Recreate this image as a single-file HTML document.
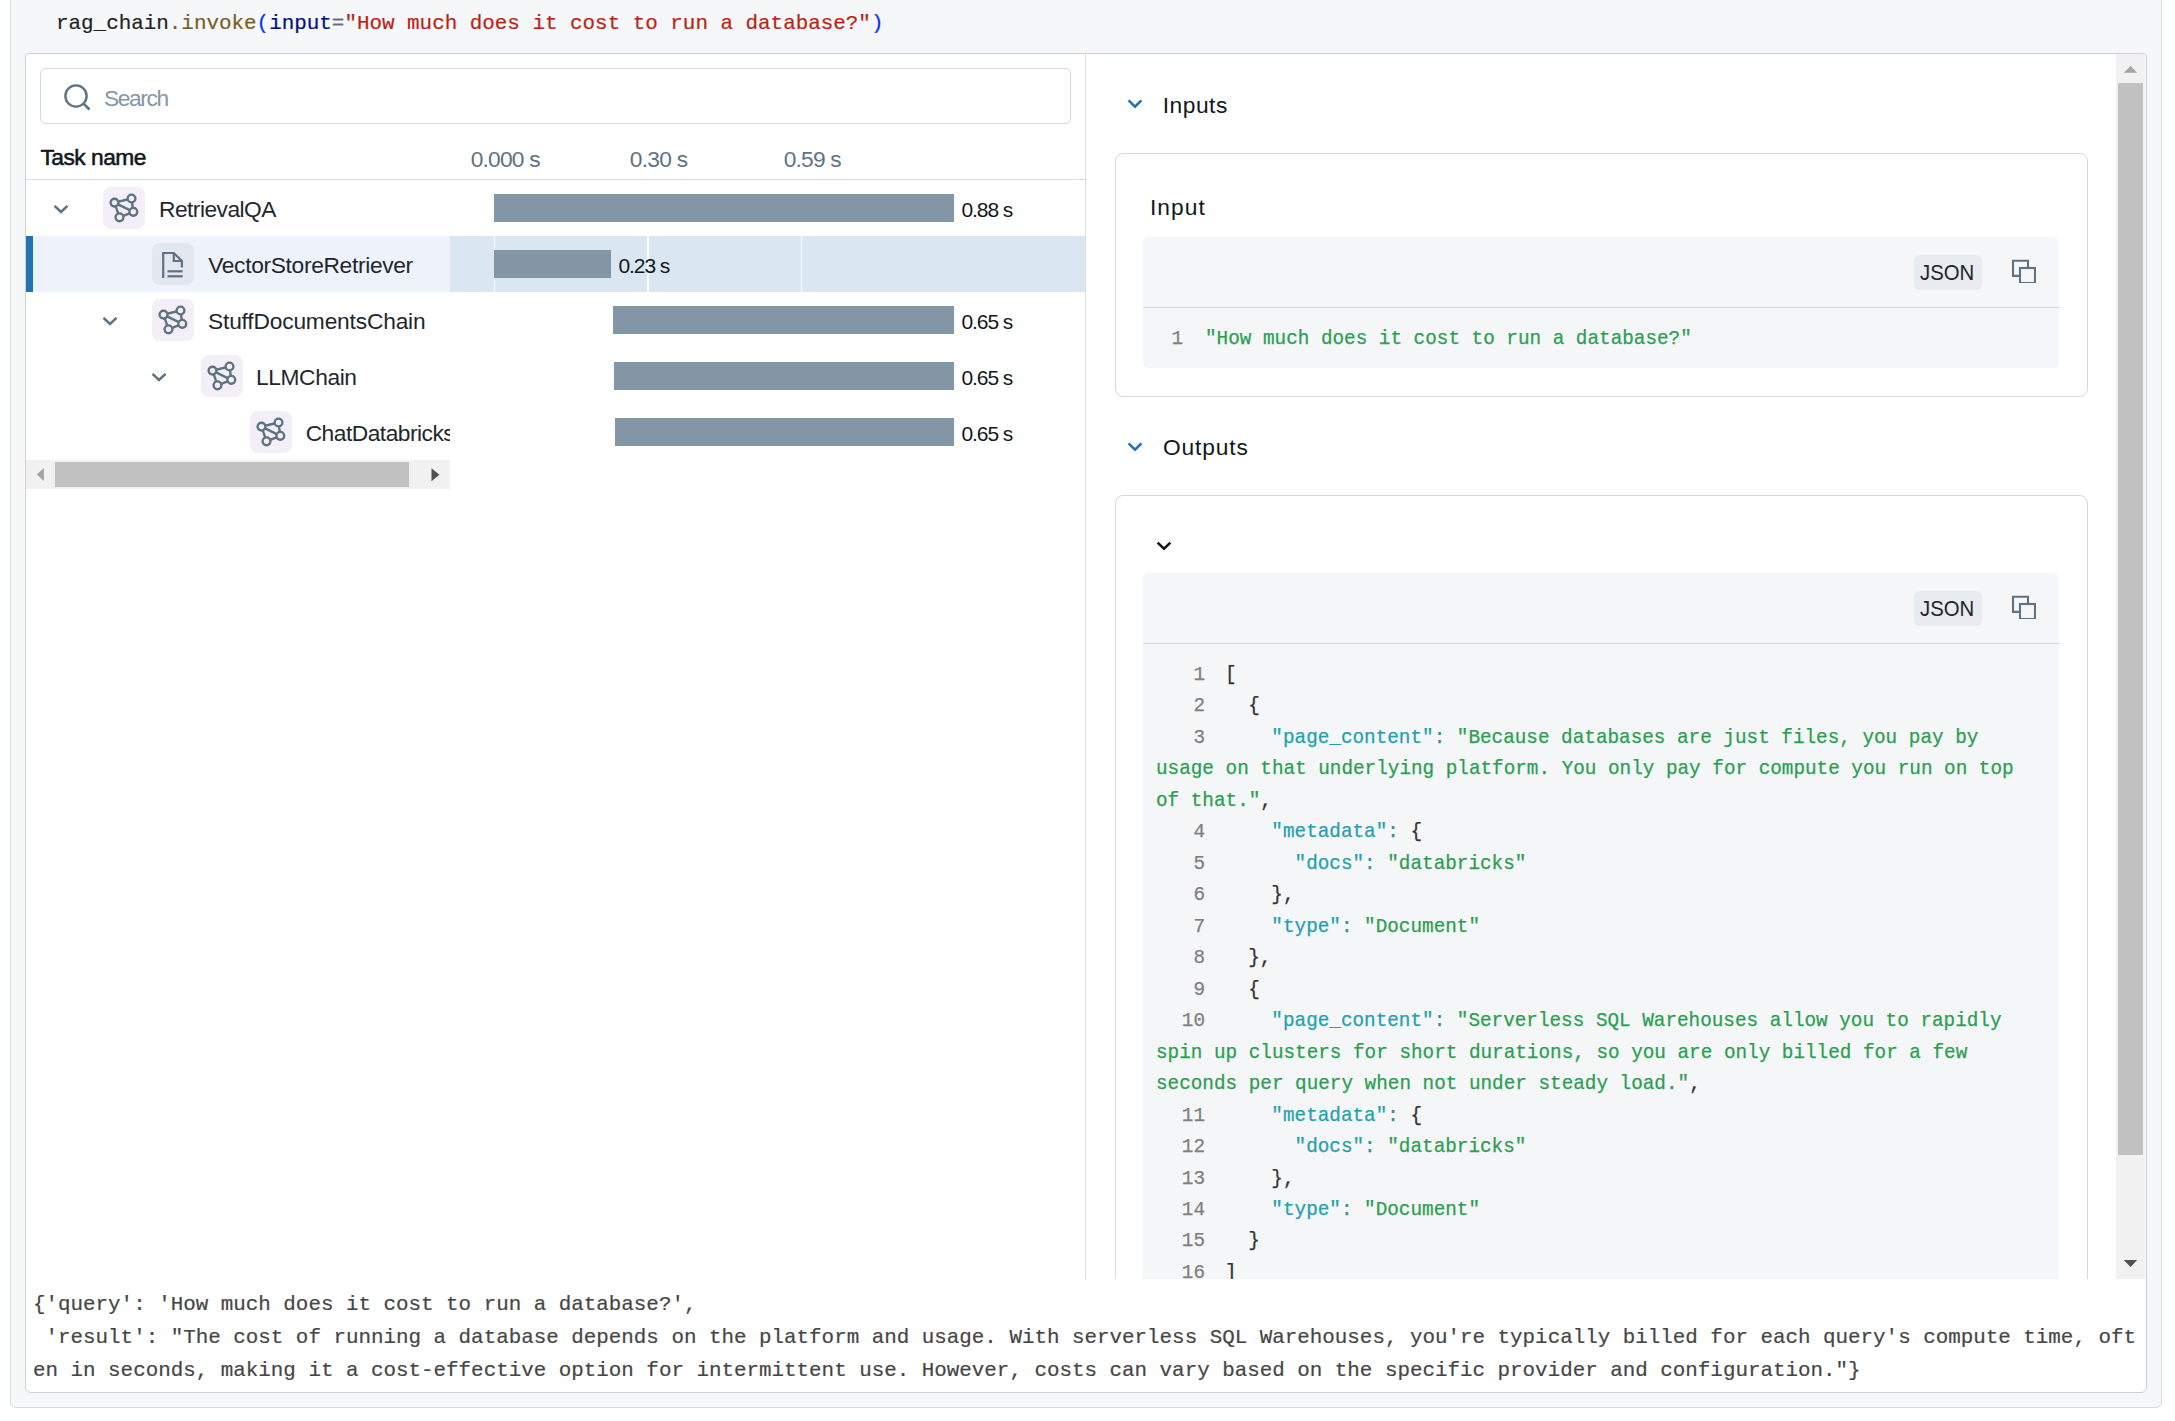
<!DOCTYPE html>
<html><head><meta charset="utf-8">
<style>
html,body{margin:0;padding:0;}
body{width:2175px;height:1421px;position:relative;overflow:hidden;background:#fff;font-family:"Liberation Sans",sans-serif;}
.a{position:absolute;}
.mono{font-family:"Liberation Mono",monospace;white-space:pre;-webkit-text-stroke-width:0.2px;}
.cell{left:10px;top:-20px;width:2151.5px;height:1428px;background:#f6f7f9;border:1.5px solid #d3dbe3;border-radius:6px;box-sizing:border-box;}
.inner{left:25px;top:53px;width:2122px;height:1340px;background:#fff;border:1.5px solid #c9d3dd;border-radius:4px 4px 6px 6px;box-sizing:border-box;}
.code1{left:56px;top:14px;font-size:20.9px;line-height:1;color:#1f2328;}
.out{left:33px;font-size:20.87px;line-height:33px;color:#464646;}
.tx{white-space:pre;line-height:1;}
.ico{width:41.5px;height:41.5px;border-radius:8px;background:#f2eff8;}
.bar{background:#8396a5;height:28px;}
.dur{font-size:19.2px;color:#11171c;}
.card{border:1.5px solid #d1d9e1;border-radius:8px;box-sizing:border-box;background:#fff;}
.cb{background:#f5f6f8;border-radius:6px;}
.pill{background:#e8ebef;border-radius:6px;}
.jl{font-family:"Liberation Mono",monospace;white-space:pre;font-size:19.32px;line-height:31.5px;color:#333;-webkit-text-stroke-width:0.25px;}
.k{color:#24a1ad}.p{color:#348f98}.s{color:#2c9e52}.n{color:#808080}
</style></head><body>
<div class="a cell"></div>
<div class="a mono code1"><span>rag_chain</span><span style="color:#795e26">.invoke</span><span style="color:#0431fa">(</span><span style="color:#001080">input</span><span style="color:#5f6b7a">=</span><span style="color:#bd2312">"How much does it cost to run a database?"</span><span style="color:#0431fa">)</span></div>
<div class="a inner"></div>


<!-- LEFT PANEL -->
<div class="a" style="left:1084.6px;top:54px;width:1.5px;height:1225px;background:#d7dee5"></div>
<div class="a" style="left:40px;top:67.6px;width:1031px;height:56.4px;border:1.5px solid #d1d9e1;border-radius:6px;box-sizing:border-box"></div>
<svg class="a" style="left:60px;top:80px" width="34" height="34" viewBox="0 0 34 34"><circle cx="16" cy="16" r="10.6" fill="none" stroke="#5f7281" stroke-width="2.4"/><line x1="23.8" y1="23.8" x2="29.5" y2="29.5" stroke="#5f7281" stroke-width="2.6"/></svg>
<div class="a tx" style="left:104px;top:86.9px;font-size:22.75px;letter-spacing:-1.41px;color:#8396a5">Search</div>
<div class="a tx" style="left:40.4px;top:145.6px;font-size:22.75px;-webkit-text-stroke:0.55px #11171c;letter-spacing:-0.5px;color:#11171c">Task name</div>
<div class="a tx" style="left:470.7px;top:148.4px;font-size:22.75px;letter-spacing:-0.79px;color:#5f7281">0.000 s</div>
<div class="a tx" style="left:629.8px;top:148.4px;font-size:22.75px;letter-spacing:-0.71px;color:#5f7281">0.30 s</div>
<div class="a tx" style="left:783.7px;top:148.4px;font-size:22.75px;letter-spacing:-0.79px;color:#5f7281">0.59 s</div>
<div class="a" style="left:26px;top:178.8px;width:1059px;height:1.5px;background:#d7dee5"></div>
<!-- selected row -->
<div class="a" style="left:26px;top:236px;width:424px;height:56px;background:#eef3fb"></div>
<div class="a" style="left:450px;top:236px;width:635px;height:56px;background:#dbe6f3"></div>
<div class="a" style="left:26px;top:236px;width:7px;height:56px;background:#2272b4"></div>
<div class="a" style="left:493.5px;top:236px;width:1.5px;height:56px;background:#fff"></div>
<div class="a" style="left:647px;top:236px;width:2px;height:56px;background:#fff"></div>
<div class="a" style="left:800.5px;top:236px;width:1.5px;height:56px;background:#fff"></div>
<svg class="a" style="left:51.7px;top:203px" width="18" height="12" viewBox="0 0 18 12"><polyline points="2.5,2.8 9,9 15.5,2.8" fill="none" stroke="#5f7281" stroke-width="2.5"/></svg>
<div class="a ico" style="left:103.2px;top:187px;background:#f2eff8"><svg width="42" height="42" viewBox="0 0 42 42" style="position:absolute;left:0;top:0"><g fill="none" stroke="#5f7281" stroke-width="2.4"><line x1="11.5" y1="15.6" x2="28.5" y2="11.5"/><line x1="11.5" y1="15.6" x2="30.3" y2="24.8"/><line x1="11.5" y1="15.6" x2="16.5" y2="30.3"/><line x1="28.5" y1="11.5" x2="30.3" y2="24.8"/><line x1="30.3" y1="24.8" x2="16.5" y2="30.3"/></g><g fill="#f2eff8" stroke="#5f7281" stroke-width="2.4"><circle cx="11.5" cy="15.6" r="3.9"/><circle cx="28.5" cy="11.5" r="3.9"/><circle cx="30.3" cy="24.8" r="3.9"/><circle cx="16.5" cy="30.3" r="3.9"/></g></svg></div>
<div class="a" style="left:159.0px;top:188px;width:291.0px;height:40px;overflow:hidden"><div class="tx" style="position:absolute;left:0;top:10.4px;font-size:22.75px;letter-spacing:-0.525px;color:#1f272d">RetrievalQA</div></div>
<div class="a ico" style="left:152.2px;top:243px;background:#e2e7f0"><svg width="42" height="42" viewBox="0 0 42 42" style="position:absolute;left:0;top:0"><g fill="none" stroke="#5f7281" stroke-width="2.2"><polyline points="11.2,35 11.2,10 21.8,10 29.9,18 29.9,24.4"/><polyline points="21.8,10 21.8,18 29.9,18"/><line x1="15.5" y1="28.3" x2="30.6" y2="28.3"/><line x1="15.5" y1="33.3" x2="30.6" y2="33.3"/></g></svg></div>
<div class="a" style="left:208.2px;top:244px;width:241.8px;height:40px;overflow:hidden"><div class="tx" style="position:absolute;left:0;top:10.4px;font-size:22.75px;letter-spacing:-0.325px;color:#1f272d">VectorStoreRetriever</div></div>
<svg class="a" style="left:100.7px;top:315px" width="18" height="12" viewBox="0 0 18 12"><polyline points="2.5,2.8 9,9 15.5,2.8" fill="none" stroke="#5f7281" stroke-width="2.5"/></svg>
<div class="a ico" style="left:152.2px;top:299px;background:#f2eff8"><svg width="42" height="42" viewBox="0 0 42 42" style="position:absolute;left:0;top:0"><g fill="none" stroke="#5f7281" stroke-width="2.4"><line x1="11.5" y1="15.6" x2="28.5" y2="11.5"/><line x1="11.5" y1="15.6" x2="30.3" y2="24.8"/><line x1="11.5" y1="15.6" x2="16.5" y2="30.3"/><line x1="28.5" y1="11.5" x2="30.3" y2="24.8"/><line x1="30.3" y1="24.8" x2="16.5" y2="30.3"/></g><g fill="#f2eff8" stroke="#5f7281" stroke-width="2.4"><circle cx="11.5" cy="15.6" r="3.9"/><circle cx="28.5" cy="11.5" r="3.9"/><circle cx="30.3" cy="24.8" r="3.9"/><circle cx="16.5" cy="30.3" r="3.9"/></g></svg></div>
<div class="a" style="left:208.0px;top:300px;width:242.0px;height:40px;overflow:hidden"><div class="tx" style="position:absolute;left:0;top:10.4px;font-size:22.75px;letter-spacing:-0.18px;color:#1f272d">StuffDocumentsChain</div></div>
<svg class="a" style="left:149.7px;top:371px" width="18" height="12" viewBox="0 0 18 12"><polyline points="2.5,2.8 9,9 15.5,2.8" fill="none" stroke="#5f7281" stroke-width="2.5"/></svg>
<div class="a ico" style="left:201.2px;top:355px;background:#f2eff8"><svg width="42" height="42" viewBox="0 0 42 42" style="position:absolute;left:0;top:0"><g fill="none" stroke="#5f7281" stroke-width="2.4"><line x1="11.5" y1="15.6" x2="28.5" y2="11.5"/><line x1="11.5" y1="15.6" x2="30.3" y2="24.8"/><line x1="11.5" y1="15.6" x2="16.5" y2="30.3"/><line x1="28.5" y1="11.5" x2="30.3" y2="24.8"/><line x1="30.3" y1="24.8" x2="16.5" y2="30.3"/></g><g fill="#f2eff8" stroke="#5f7281" stroke-width="2.4"><circle cx="11.5" cy="15.6" r="3.9"/><circle cx="28.5" cy="11.5" r="3.9"/><circle cx="30.3" cy="24.8" r="3.9"/><circle cx="16.5" cy="30.3" r="3.9"/></g></svg></div>
<div class="a" style="left:256.0px;top:356px;width:194.0px;height:40px;overflow:hidden"><div class="tx" style="position:absolute;left:0;top:10.4px;font-size:22.75px;letter-spacing:-0.385px;color:#1f272d">LLMChain</div></div>
<div class="a ico" style="left:250.2px;top:411px;background:#f2eff8"><svg width="42" height="42" viewBox="0 0 42 42" style="position:absolute;left:0;top:0"><g fill="none" stroke="#5f7281" stroke-width="2.4"><line x1="11.5" y1="15.6" x2="28.5" y2="11.5"/><line x1="11.5" y1="15.6" x2="30.3" y2="24.8"/><line x1="11.5" y1="15.6" x2="16.5" y2="30.3"/><line x1="28.5" y1="11.5" x2="30.3" y2="24.8"/><line x1="30.3" y1="24.8" x2="16.5" y2="30.3"/></g><g fill="#f2eff8" stroke="#5f7281" stroke-width="2.4"><circle cx="11.5" cy="15.6" r="3.9"/><circle cx="28.5" cy="11.5" r="3.9"/><circle cx="30.3" cy="24.8" r="3.9"/><circle cx="16.5" cy="30.3" r="3.9"/></g></svg></div>
<div class="a" style="left:305.7px;top:412px;width:144.3px;height:40px;overflow:hidden"><div class="tx" style="position:absolute;left:0;top:10.4px;font-size:22.75px;letter-spacing:-0.5px;color:#1f272d">ChatDatabricks</div></div>
<div class="a bar" style="left:494px;top:194px;width:459.9px"></div>
<div class="a tx dur" style="left:961.4px;top:198.8px;font-size:21px;letter-spacing:-1.06px">0.88 s</div>
<div class="a bar" style="left:494px;top:250px;width:117px"></div>
<div class="a tx dur" style="left:618.5px;top:254.8px;font-size:21px;letter-spacing:-1.1px">0.23 s</div>
<div class="a bar" style="left:613px;top:306px;width:340.9px"></div>
<div class="a tx dur" style="left:961.4px;top:310.8px;font-size:21px;letter-spacing:-1.06px">0.65 s</div>
<div class="a bar" style="left:613.9px;top:362px;width:340.0px"></div>
<div class="a tx dur" style="left:961.4px;top:366.8px;font-size:21px;letter-spacing:-1.06px">0.65 s</div>
<div class="a bar" style="left:615.1px;top:418px;width:338.8px"></div>
<div class="a tx dur" style="left:961.4px;top:422.8px;font-size:21px;letter-spacing:-1.06px">0.65 s</div>
<div class="a" style="left:26px;top:459.5px;width:424px;height:29px;background:#f1f1f1"></div>
<div class="a" style="left:55px;top:462px;width:354px;height:24.5px;background:#c1c1c1"></div>
<svg class="a" style="left:34px;top:466px" width="14" height="16" viewBox="0 0 14 16"><polygon points="2.8,8.5 9.9,1.9 9.9,15" fill="#a3a3a3"/></svg>
<svg class="a" style="left:428px;top:466px" width="14" height="16" viewBox="0 0 14 16"><polygon points="11.4,8.7 3.5,2.2 3.5,15.3" fill="#505050"/></svg>


<!-- RIGHT PANEL -->
<div class="a" style="left:1086px;top:54px;width:1030px;height:1224.6px;overflow:hidden">
<svg class="a" style="left:40px;top:43.5px" width="18" height="12" viewBox="0 0 18 12"><polyline points="2.6,2.4 9,8.6 15.4,2.4" fill="none" stroke="#2272b4" stroke-width="2.6"/></svg>
<div class="a tx" style="left:76.7px;top:39.6px;font-size:22.75px;letter-spacing:0.53px;color:#11171c">Inputs</div>
<svg class="a" style="left:40px;top:386.5px" width="18" height="12" viewBox="0 0 18 12"><polyline points="2.6,2.4 9,8.6 15.4,2.4" fill="none" stroke="#2272b4" stroke-width="2.6"/></svg>
<div class="a tx" style="left:77px;top:382.2px;font-size:22.75px;letter-spacing:0.86px;color:#11171c">Outputs</div>
<div class="a card" style="left:28.5px;top:98.5px;width:973px;height:244px"></div>
<div class="a tx" style="left:64px;top:141.5px;font-size:22.75px;letter-spacing:1.05px;color:#11171c">Input</div>
<div class="a card" style="left:28.5px;top:441.3px;width:973px;height:1000px"></div>
<svg class="a" style="left:69px;top:485.5px" width="18" height="12" viewBox="0 0 18 12"><polyline points="2.6,2.6 9,8.8 15.4,2.6" fill="none" stroke="#11171c" stroke-width="2.6"/></svg>
<div class="a cb" style="left:57px;top:183px;width:915.7px;height:130.5px"></div>
<div class="a pill" style="left:828.2px;top:200.9px;width:67.4px;height:34.8px"></div>
<div class="a tx" style="left:834.3px;top:206.6px;font-size:22.75px;letter-spacing:0px;transform:scaleX(0.895);transform-origin:0 0;color:#1f272d">JSON</div>
<svg class="a" style="left:920px;top:199px" width="30" height="30" viewBox="0 0 30 30"><g fill="none" stroke="#5f7281" stroke-width="2.1"><polyline points="14,22.9 7,22.9 7,7.8 22,7.8 22,15"/><rect x="14" y="15" width="15" height="15"/></g></svg>
<div class="a" style="left:57px;top:252.6px;width:915.7px;height:1.5px;background:#d1d9e1"></div>
<div class="a cb" style="left:57px;top:518.8px;width:915.7px;height:1000px"></div>
<div class="a pill" style="left:828.2px;top:536.8px;width:67.4px;height:34.8px"></div>
<div class="a tx" style="left:834.3px;top:542.5px;font-size:22.75px;letter-spacing:0px;transform:scaleX(0.895);transform-origin:0 0;color:#1f272d">JSON</div>
<svg class="a" style="left:920px;top:534.9px" width="30" height="30" viewBox="0 0 30 30"><g fill="none" stroke="#5f7281" stroke-width="2.1"><polyline points="14,22.9 7,22.9 7,7.8 22,7.8 22,15"/><rect x="14" y="15" width="15" height="15"/></g></svg>
<div class="a" style="left:57px;top:588.5px;width:915.7px;height:1.5px;background:#d1d9e1"></div>
<div class="a jl" style="left:85.5px;top:276.39px;line-height:1"><span class="n">1</span></div>
<div class="a jl" style="left:119.0px;top:276.39px;line-height:1"><span class="s">"How much does it cost to run a database?"</span></div>
<div class="a jl n" style="left:69px;top:611.99px;width:50px;text-align:right;line-height:1">1</div>
<div class="a jl" style="left:139.0px;top:611.99px;line-height:1">[</div>
<div class="a jl n" style="left:69px;top:643.46px;width:50px;text-align:right;line-height:1">2</div>
<div class="a jl" style="left:139.0px;top:643.46px;line-height:1">  {</div>
<div class="a jl n" style="left:69px;top:674.93px;width:50px;text-align:right;line-height:1">3</div>
<div class="a jl" style="left:139.0px;top:674.93px;line-height:1">    <span class="k">"page_content"</span><span class="p">:</span> <span class="s">"Because databases are just files, you pay by</span></div>
<div class="a jl" style="left:70.0px;top:706.4px;line-height:1"><span class="s">usage on that underlying platform. You only pay for compute you run on top</span></div>
<div class="a jl" style="left:70.0px;top:737.87px;line-height:1"><span class="s">of that."</span>,</div>
<div class="a jl n" style="left:69px;top:769.34px;width:50px;text-align:right;line-height:1">4</div>
<div class="a jl" style="left:139.0px;top:769.34px;line-height:1">    <span class="k">"metadata"</span><span class="p">:</span> {</div>
<div class="a jl n" style="left:69px;top:800.81px;width:50px;text-align:right;line-height:1">5</div>
<div class="a jl" style="left:139.0px;top:800.81px;line-height:1">      <span class="k">"docs"</span><span class="p">:</span> <span class="s">"databricks"</span></div>
<div class="a jl n" style="left:69px;top:832.28px;width:50px;text-align:right;line-height:1">6</div>
<div class="a jl" style="left:139.0px;top:832.28px;line-height:1">    },</div>
<div class="a jl n" style="left:69px;top:863.75px;width:50px;text-align:right;line-height:1">7</div>
<div class="a jl" style="left:139.0px;top:863.75px;line-height:1">    <span class="k">"type"</span><span class="p">:</span> <span class="s">"Document"</span></div>
<div class="a jl n" style="left:69px;top:895.22px;width:50px;text-align:right;line-height:1">8</div>
<div class="a jl" style="left:139.0px;top:895.22px;line-height:1">  },</div>
<div class="a jl n" style="left:69px;top:926.69px;width:50px;text-align:right;line-height:1">9</div>
<div class="a jl" style="left:139.0px;top:926.69px;line-height:1">  {</div>
<div class="a jl n" style="left:69px;top:958.16px;width:50px;text-align:right;line-height:1">10</div>
<div class="a jl" style="left:139.0px;top:958.16px;line-height:1">    <span class="k">"page_content"</span><span class="p">:</span> <span class="s">"Serverless SQL Warehouses allow you to rapidly</span></div>
<div class="a jl" style="left:70.0px;top:989.63px;line-height:1"><span class="s">spin up clusters for short durations, so you are only billed for a few</span></div>
<div class="a jl" style="left:70.0px;top:1021.1px;line-height:1"><span class="s">seconds per query when not under steady load."</span>,</div>
<div class="a jl n" style="left:69px;top:1052.57px;width:50px;text-align:right;line-height:1">11</div>
<div class="a jl" style="left:139.0px;top:1052.57px;line-height:1">    <span class="k">"metadata"</span><span class="p">:</span> {</div>
<div class="a jl n" style="left:69px;top:1084.04px;width:50px;text-align:right;line-height:1">12</div>
<div class="a jl" style="left:139.0px;top:1084.04px;line-height:1">      <span class="k">"docs"</span><span class="p">:</span> <span class="s">"databricks"</span></div>
<div class="a jl n" style="left:69px;top:1115.51px;width:50px;text-align:right;line-height:1">13</div>
<div class="a jl" style="left:139.0px;top:1115.51px;line-height:1">    },</div>
<div class="a jl n" style="left:69px;top:1146.98px;width:50px;text-align:right;line-height:1">14</div>
<div class="a jl" style="left:139.0px;top:1146.98px;line-height:1">    <span class="k">"type"</span><span class="p">:</span> <span class="s">"Document"</span></div>
<div class="a jl n" style="left:69px;top:1178.45px;width:50px;text-align:right;line-height:1">15</div>
<div class="a jl" style="left:139.0px;top:1178.45px;line-height:1">  }</div>
<div class="a jl n" style="left:69px;top:1209.92px;width:50px;text-align:right;line-height:1">16</div>
<div class="a jl" style="left:139.0px;top:1209.92px;line-height:1">]</div>
</div>
<div class="a" style="left:2116px;top:54px;width:29px;height:1224.6px;background:#f1f1f1"></div>
<div class="a" style="left:2118px;top:83px;width:25px;height:1071.8px;background:#c1c1c1"></div>
<svg class="a" style="left:2122px;top:63px" width="18" height="12" viewBox="0 0 18 12"><polygon points="8.5,3 15.2,9.8 1.8,9.8" fill="#a3a3a3"/></svg>
<svg class="a" style="left:2122px;top:1258px" width="18" height="12" viewBox="0 0 18 12"><polygon points="8.5,9 15.2,2 1.8,2" fill="#505050"/></svg>

<!-- OUTPUT TEXT -->
<div class="a mono out" style="top:1287.6px">{'query': 'How much does it cost to run a database?',
 'result': "The cost of running a database depends on the platform and usage. With serverless SQL Warehouses, you're typically billed for each query's compute time, oft
en in seconds, making it a cost-effective option for intermittent use. However, costs can vary based on the specific provider and configuration."}</div>

</body></html>
